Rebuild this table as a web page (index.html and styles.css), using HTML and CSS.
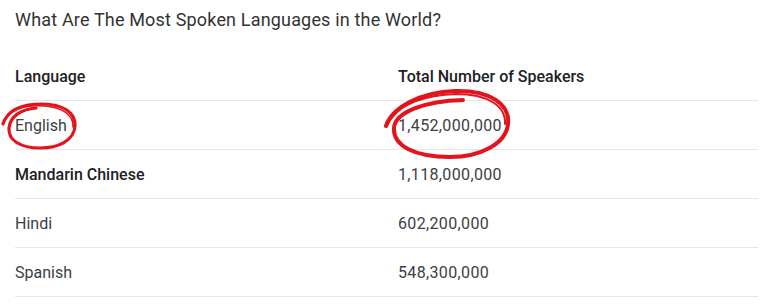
FILE: index.html
```html
<!DOCTYPE html>
<html>
<head>
<meta charset="utf-8">
<link rel="stylesheet" href="styles.css">
</head>
<body>
<div class="page">
  <h1 class="title">What Are The Most Spoken Languages in the World?</h1>
  <div class="table">
    <div class="row head">
      <div class="cell">Language</div>
      <div class="cell">Total Number of Speakers</div>
    </div>
    <div class="row">
      <div class="cell">English</div>
      <div class="cell num">1,452,000,000</div>
    </div>
    <div class="row">
      <div class="cell strong">Mandarin Chinese</div>
      <div class="cell num">1,118,000,000</div>
    </div>
    <div class="row">
      <div class="cell">Hindi</div>
      <div class="cell num">602,200,000</div>
    </div>
    <div class="row">
      <div class="cell">Spanish</div>
      <div class="cell num">548,300,000</div>
    </div>
  </div>
  <svg class="marks" width="768" height="308" viewBox="0 0 768 308">
    <g fill="none" stroke="#e3131b" stroke-linecap="round" stroke-linejoin="round">
      <path stroke-width="3.2" d="M3,124 C8,108 25,104 42,104 C62,104 76,112 75,126 C74,141 58,148 40,148 C20,148 8,140 9,128 C10,116 22,109 36,108"/>
      <path stroke-width="1.6" d="M5,120 C12,108 28,105 44,106 C62,107 74,115 73,127"/>
      <path stroke-width="4" d="M386,126 C392,108 420,92 455,91 C490,90 510,104 508,124 C506,144 480,157 450,157 C415,157 393,146 394,128 C395,112 425,101 463,100"/>
      <path stroke-width="2" d="M390,120 C400,104 425,95 456,94 C488,94 506,106 505,124"/>
    </g>
  </svg>
</div>
</body>
</html>
```
FILE: styles.css
```css
html, body {
  margin: 0;
  padding: 0;
  background: #ffffff;
}
.page {
  position: relative;
  width: 768px;
  height: 308px;
  overflow: hidden;
  font-family: Roboto, "Open Sans", sans-serif;
  color: #3c4043;
}
.title {
  margin: 0;
  padding: 9px 0 0 15px;
  height: 43px;
  font-size: 18px;
  line-height: 22px;
  font-weight: 400;
  letter-spacing: 0.17px;
  color: #333333;
}
.table {
  margin: 0 10px 0 15px;
}
.row {
  display: grid;
  grid-template-columns: 383px 1fr;
  align-items: center;
  height: 48px;
  border-bottom: 1px solid #e6e6e6;
  font-size: 16px;
}
.row.head {
  font-weight: 500;
  color: #202124;
}
.cell.strong {
  font-weight: 500;
  color: #202124;
}
.cell.num {
  letter-spacing: 0.35px;
}
.marks {
  position: absolute;
  left: 0;
  top: 0;
  pointer-events: none;
}
```
